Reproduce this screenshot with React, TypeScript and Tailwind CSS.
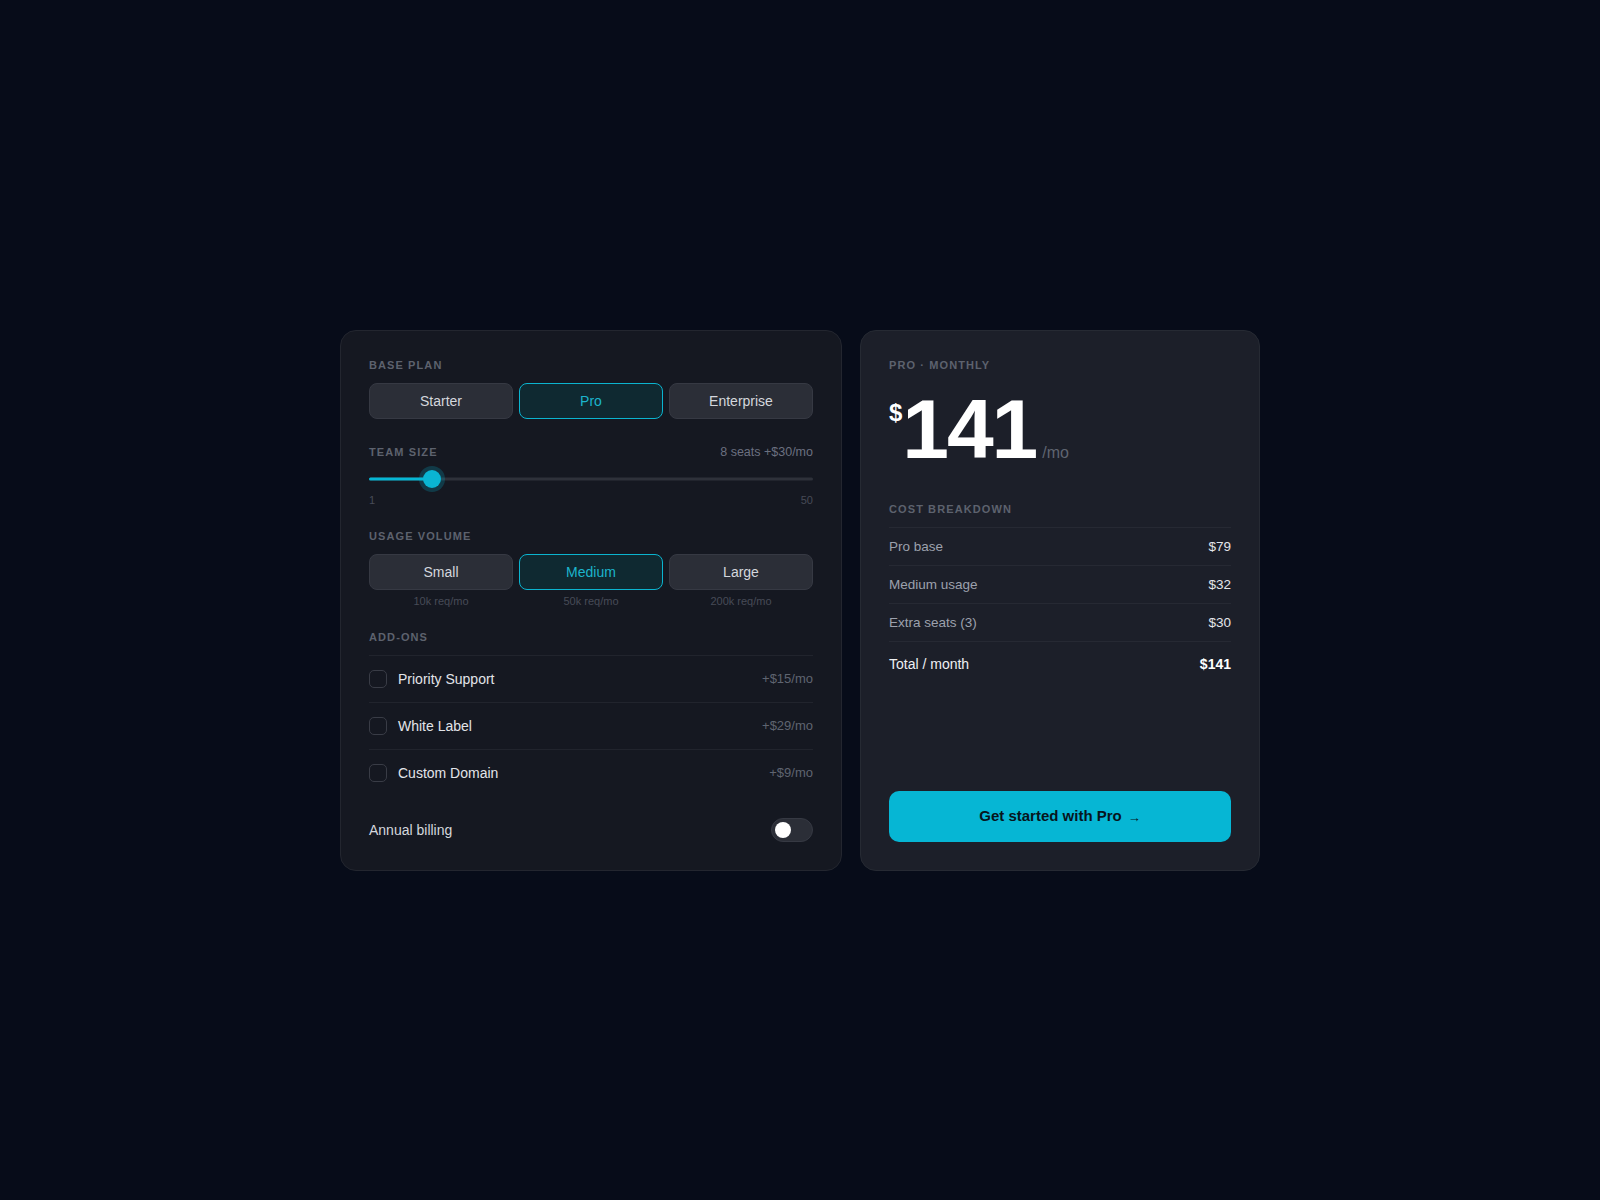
import clsx from "clsx";

const plans = ["Starter", "Pro", "Enterprise"];

const volumes = [
  { name: "Small", sub: "10k req/mo" },
  { name: "Medium", sub: "50k req/mo" },
  { name: "Large", sub: "200k req/mo" },
];

const addons = [
  { name: "Priority Support", price: "+$15/mo" },
  { name: "White Label", price: "+$29/mo" },
  { name: "Custom Domain", price: "+$9/mo" },
];

const breakdown = [
  { label: "Pro base", value: "$79" },
  { label: "Medium usage", value: "$32" },
  { label: "Extra seats (3)", value: "$30" },
];

const seats = 8;
const minSeats = 1;
const maxSeats = 50;

function Label({ children }: { children: React.ReactNode }) {
  return (
    <div className="text-[11px] font-semibold uppercase leading-3 tracking-[0.1em] text-[#5d626e]">
      {children}
    </div>
  );
}

function Segmented({ options, value }: { options: string[]; value: string }) {
  return (
    <div className="grid grid-cols-3 gap-1.5">
      {options.map((o) => (
        <button
          key={o}
          className={clsx(
            "h-9 rounded-lg border text-sm",
            o === value
              ? "border-[#0bb4cf] bg-[#0f2931] text-[#1cb4cc]"
              : "border-[#363943] bg-[#2b2e37] text-[#d4d7dd]",
          )}
        >
          {o}
        </button>
      ))}
    </div>
  );
}

function Slider() {
  const pct = ((seats - minSeats) / (maxSeats - minSeats)) * 100;
  return (
    <div className="relative mt-[9px] h-5">
      <div className="absolute inset-x-0 top-1/2 h-[3px] -translate-y-1/2 rounded-full bg-[#2e313a]" />
      <div
        className="absolute left-0 top-1/2 h-[3px] -translate-y-1/2 rounded-full bg-[#06b6d4]"
        style={{ width: `${pct}%` }}
      />
      <div
        className="absolute top-1/2 size-[18px] -translate-x-1/2 -translate-y-1/2 rounded-full bg-[#0ab5d3] shadow-[0_0_0_4px_rgba(6,182,212,0.22)]"
        style={{ left: `${pct}%` }}
      />
    </div>
  );
}

function ConfigCard() {
  return (
    <div className="w-[502px] rounded-2xl border border-[#23262f] bg-[#151821] p-7">
      <Label>Base plan</Label>
      <div className="mt-3">
        <Segmented options={plans} value="Pro" />
      </div>

      <div className="mt-[25px] flex h-4 items-center justify-between">
        <Label>Team size</Label>
        <span className="pt-px text-[12.5px] text-[#6b7080]">8 seats +$30/mo</span>
      </div>
      <Slider />
      <div className="mt-[5px] flex justify-between text-[11px] leading-3 text-[#474b57]">
        <span>{minSeats}</span>
        <span>{maxSeats}</span>
      </div>

      <div className="mt-6">
        <Label>Usage volume</Label>
      </div>
      <div className="mt-3">
        <Segmented options={volumes.map((v) => v.name)} value="Medium" />
      </div>
      <div className="mt-[5px] grid grid-cols-3 gap-1.5 text-center text-[11px] leading-3 text-[#474b57]">
        {volumes.map((v) => (
          <span key={v.name}>{v.sub}</span>
        ))}
      </div>

      <div className="mt-6">
        <Label>Add-ons</Label>
      </div>
      <div className="mt-3">
        {addons.map((a) => (
          <div
            key={a.name}
            className="flex h-[47px] items-center justify-between border-t border-[#21242d]"
          >
            <div className="flex items-center gap-[11px]">
              <span className="size-[18px] rounded-[5px] border border-[#393c46]" />
              <span className="text-sm text-[#e2e4e9]">{a.name}</span>
            </div>
            <span className="text-[13px] text-[#5f6470]">{a.price}</span>
          </div>
        ))}
      </div>

      <div className="mt-[22px] flex items-center justify-between">
        <span className="text-sm text-[#d4d7dd]">Annual billing</span>
        <div className="h-6 w-[42px] rounded-full border border-[#363943] bg-[#2b2e37] p-[3px]">
          <div className="size-4 rounded-full bg-white" />
        </div>
      </div>
    </div>
  );
}

function SummaryCard() {
  return (
    <div className="flex w-[400px] flex-col rounded-2xl border border-[#262a33] bg-[#1c1f29] p-7">
      <Label>Pro · Monthly</Label>
      <div className="mt-4 flex items-baseline">
        <span className="mt-[14px] self-start text-2xl font-bold leading-none text-white">$</span>
        <span className="text-[84px] font-bold leading-none tracking-tight text-white">141</span>
        <span className="ml-[6px] text-base leading-none text-[#5f6470]">/mo</span>
      </div>

      <div className="mt-8">
        <Label>Cost breakdown</Label>
      </div>
      <div className="mt-3">
        {breakdown.map((r) => (
          <div
            key={r.label}
            className="flex h-[38px] items-center justify-between border-t border-[#262933] pt-[2px] text-[13.5px]"
          >
            <span className="text-[#9ca1ad]">{r.label}</span>
            <span className="text-[#e4e6eb]">{r.value}</span>
          </div>
        ))}
        <div className="flex h-[46px] items-center justify-between border-t border-[#262933] text-sm">
          <span className="text-[#eef0f3]">Total / month</span>
          <span className="font-bold text-white">$141</span>
        </div>
      </div>

      <button className="mt-auto flex h-[51px] items-center justify-center rounded-[10px] bg-[#06b6d4] text-[15px] font-bold text-[#07151d]">
        Get started with Pro
        <span className="ml-1.5 mt-1 text-[13px] font-normal">→</span>
      </button>
    </div>
  );
}

export default function App() {
  return (
    <div className="flex min-h-screen items-center justify-center bg-[#070c19] font-['Liberation_Sans',Arial,sans-serif]">
      <div className="flex gap-[18px]">
        <ConfigCard />
        <SummaryCard />
      </div>
    </div>
  );
}
